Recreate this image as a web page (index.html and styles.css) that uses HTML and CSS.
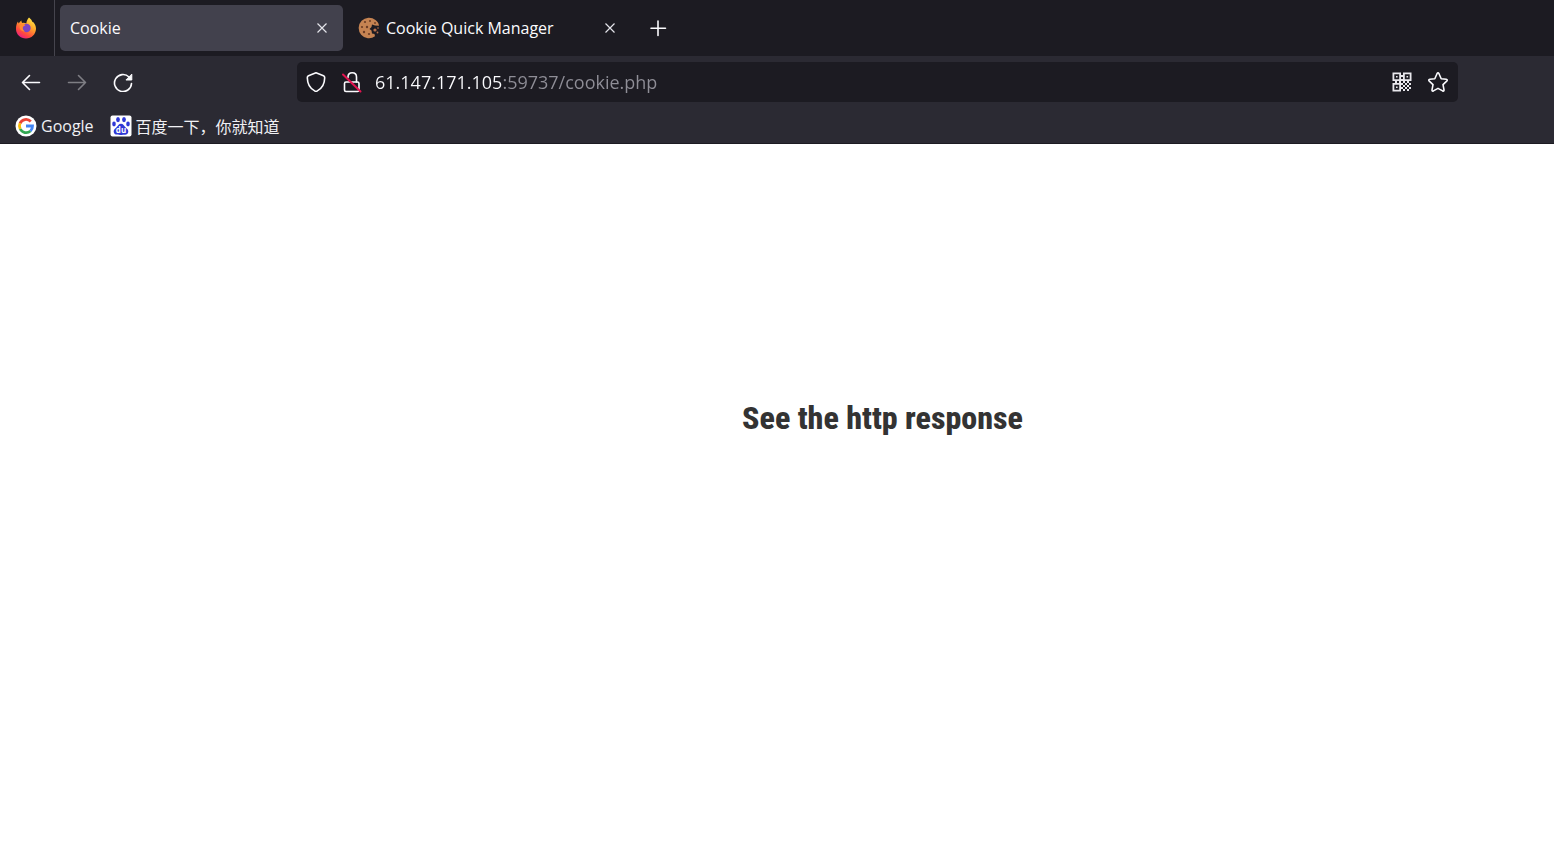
FILE: index.html
```html
<!DOCTYPE html>
<html lang="en">
<head>
<meta charset="utf-8">
<title>Cookie</title>
<link rel="stylesheet" href="styles.css">
</head>
<body>
<header class="browser">
  <div class="tabbar">
    <button class="icon-button view-button" type="button" aria-label="Firefox View">
      <svg class="icon" viewBox="0 0 22 22">
        <defs>
          <linearGradient id="flame" x1="0.85" y1="0" x2="0.25" y2="1">
            <stop offset="0" stop-color="#fff04a"/>
            <stop offset="0.4" stop-color="#ffa52a"/>
            <stop offset="0.75" stop-color="#ff4a3d"/>
            <stop offset="1" stop-color="#e8198b"/>
          </linearGradient>
        </defs>
        <path fill="url(#flame)" d="M14 0.500C16 2 17 3.500 17.500 5c1 .2 1.500.8 1.800 1.500C20.800 8.500 21 10.500 21 12c-.4 5.500-4.500 9.500-10 9.500S1 17.500 1 12c0-3 .5-5.500 2-7.500.2 1 .4 1.500.8 2C4.500 5 5.500 4 6.500 3.500c-.1 1 .2 2 .8 2.500 1.500-.4 3 0 4 .6C11.500 4 12.500 2 14 .5z"/>
        <circle cx="11.500" cy="11" r="4.200" fill="#7b45c4"/>
        <path fill="#ff8a30" d="M5 8c2-1 4-.9 5.500 0-.5 1-2 1.200-2.700 1.800-.3 2 .4 3.700 2.200 4.700-3.500 0-6.500-2.500-5-6.500z"/>
      </svg>
    </button>
    <div class="tab tab-active">
      <span class="tab-title">Cookie</span>
      <button class="tab-close" type="button" aria-label="Close Cookie">
        <svg class="cross" viewBox="0 0 12 12"><path d="M1.500 1.500l9 9M10.500 1.500l-9 9"/></svg>
      </button>
    </div>
    <div class="tab">
      <svg class="icon" viewBox="0 0 22 22">
        <path fill="#c58352" d="M17.500 3A10.300 10.300 0 1 0 17 19.300l-.5-2.300-2.500-.5-.5-3-2-1.500 2-2 .5-2.500 3 1 4 .2c-.2-2.200-1.500-4.400-3.500-5.700z"/>
        <g fill="#6b3d25"><circle cx="7" cy="5" r="1.100"/><circle cx="12" cy="4" r="1"/><circle cx="4" cy="10" r="1.100"/><circle cx="9" cy="10" r="1.200"/><circle cx="6" cy="15" r="1.200"/><circle cx="11" cy="17" r="1.100"/><circle cx="17" cy="6" r="0.900"/></g>
        <g fill="#b9714b"><circle cx="17" cy="13" r="1.600"/><circle cx="20" cy="11" r="0.800"/><circle cx="19.500" cy="15.500" r="0.900"/></g>
      </svg>
      <span class="tab-title">Cookie Quick Manager</span>
      <button class="tab-close" type="button" aria-label="Close Cookie Quick Manager">
        <svg class="cross" viewBox="0 0 12 12"><path d="M1.500 1.500l9 9M10.500 1.500l-9 9"/></svg>
      </button>
    </div>
    <button class="icon-button new-tab" type="button" aria-label="New tab">
      <svg class="line-icon" viewBox="0 0 20 20"><path d="M10 3v14.500M3 10.200h14.500"/></svg>
    </button>
  </div>

  <div class="toolbar">
    <nav class="nav-buttons" aria-label="History">
      <button class="icon-button" type="button" aria-label="Back">
        <svg class="line-icon" viewBox="0 0 20 20"><path d="M18.500 10.500H1.500M8.500 3.500l-7 7 7 7"/></svg>
      </button>
      <button class="icon-button" type="button" aria-label="Forward" disabled>
        <svg class="line-icon" viewBox="0 0 20 20"><path d="M1.500 10.500h17M11.500 3.500l7 7-7 7"/></svg>
      </button>
      <button class="icon-button" type="button" aria-label="Reload">
        <svg class="line-icon" viewBox="0 0 20 20"><path d="M18.500 11.500A8.500 8.500 0 1 1 16 5"/><path class="solid" d="M18.800 2.500v5.500h-5.500z"/></svg>
      </button>
    </nav>
    <div class="urlbar">
      <button class="icon-button url-icon" type="button" aria-label="Tracking protection">
        <svg class="icon outline" viewBox="0 0 22 22"><path d="M11 1.800L18.500 4.800c.9.400 1.200 1 1.200 2-.1 6-3 10.900-7.400 13.100-.9.400-1.700.4-2.600 0C5.300 17.700 2.400 12.800 2.300 6.800c0-1 .3-1.600 1.200-2z"/></svg>
      </button>
      <button class="icon-button url-icon" type="button" aria-label="Connection not secure">
        <svg class="icon outline" viewBox="0 0 22 22"><rect x="3.500" y="11" width="14.500" height="9.500" rx="1.500"/><path d="M7 6.500V6c0-2.600 1.700-4.300 4.200-4.300S15.500 3.400 15.500 6v5"/><path class="slash" d="M2 3.500l17.500 17"/></svg>
      </button>
      <input class="url-input" type="text" aria-label="Address" value="61.147.171.105:59737/cookie.php" spellcheck="false">
      <button class="icon-button url-icon" type="button" aria-label="QR code">
        <svg class="icon" viewBox="0 0 22 22" fill="#e8e7ec">
          <path fill-rule="evenodd" d="M1.500 1.500H10V10H1.500zM3.300 3.300v4.900h4.900V3.300zM12 1.500h8.500V10H12zM13.800 3.300v4.900h4.900V3.300zM1.500 12H10v8.500H1.500zM3.300 13.800v4.900h4.900v-4.900z"/>
          <path d="M5 5h1.600v1.600H5zM15.500 5h1.600v1.600h-1.600zM5 15.500h1.600v1.600H5zM10 4h2v2h-2zM10 8h2v2h-2zM8 10h2v2H8zM12 10h2v2h-2zM16 10h2v2h-2zM10 12h2v2h-2zM14 12h2v2h-2zM18 12h2v2h-2zM12 14h2v2h-2zM16 14h2v2h-2zM10 16h2v2h-2zM14 16h2v2h-2zM18 16h2v2h-2zM12 18h2v2h-2zM16 18h2v2h-2zM4 10h2v2H4z"/>
        </svg>
      </button>
      <button class="icon-button url-icon" type="button" aria-label="Bookmark this page">
        <svg class="icon outline" viewBox="0 0 22 22"><path d="M10 2.700q1-1.600 2 0l2.200 5 5 .6q1.800.4.500 1.800l-3.700 3.500 1 5.200q.2 1.800-1.400 1.100L11 17.400l-4.600 2.500q-1.600.7-1.400-1.100l1-5.200-3.700-3.500Q1 8.700 2.800 8.300l5-.6z"/></svg>
      </button>
    </div>
  </div>

  <nav class="bookmarks" aria-label="Bookmarks">
    <a class="bookmark" href="#google">
      <svg class="icon" viewBox="0 0 22 22">
        <circle cx="11" cy="11" r="10.500" fill="#fff"/>
        <g fill="none" stroke-width="2.800">
          <path stroke="#ea4335" d="M5 8.300A6.600 6.600 0 0 1 15.800 6.500"/>
          <path stroke="#fbbc05" d="M5.200 14A6.600 6.600 0 0 1 5 8.300"/>
          <path stroke="#34a853" d="M15.500 16A6.600 6.600 0 0 1 5.200 14"/>
          <path stroke="#4285f4" d="M11 11h6.500c0 2-.6 3.800-2 5"/>
        </g>
      </svg>
      <span>Google</span>
    </a>
    <a class="bookmark" href="#baidu" lang="zh">
      <svg class="icon" viewBox="0 0 22 22">
        <rect x="0.500" y="0.500" width="21" height="21" rx="2" fill="#fff"/>
        <g fill="#2f38d6">
          <ellipse cx="8" cy="4.600" rx="1.900" ry="2.600"/>
          <ellipse cx="14" cy="4.600" rx="1.900" ry="2.600"/>
          <ellipse cx="4" cy="9" rx="1.800" ry="2.400"/>
          <ellipse cx="18" cy="9" rx="1.800" ry="2.400"/>
          <path d="M11 8.700c2.300 0 3 2.200 4.700 3.700 2 1.700 3 2.800 2.500 4.900-.6 2.700-3.200 2.600-7.200 2.600s-6.600.1-7.200-2.600c-.5-2.100.5-3.200 2.500-4.900 1.700-1.500 2.400-3.700 4.700-3.700z"/>
        </g>
        <text class="paw-text" x="11" y="18" text-anchor="middle">du</text>
      </svg>
      <span>百度一下，你就知道</span>
    </a>
  </nav>
</header>
<main class="page">
  <h1 class="message">See the http response</h1>
</main>
</body>
</html>
```
FILE: styles.css
```css
* {
  box-sizing: border-box;
}

body {
  margin: 0;
  min-height: 100vh;
  display: flex;
  flex-direction: column;
  background: #fff;
  font-family: "Open Sans", "Noto Sans CJK SC", sans-serif;
  font-size: 16px;
  color: #fbfbfe;
}

button {
  padding: 0;
  border: 0;
  background: none;
  color: inherit;
  font: inherit;
}

svg {
  display: block;
  flex: none;
}

.browser {
  background: #2b2a33;
  border-bottom: 1px solid #1c1b22;
}

.tabbar {
  display: flex;
  align-items: center;
  height: 56px;
  background: #1c1b22;
}

.icon-button {
  display: flex;
  align-items: center;
  justify-content: center;
  flex: none;
  width: 46px;
  height: 40px;
}

.icon-button:disabled {
  opacity: 0.4;
}

.view-button {
  width: 55px;
  height: 56px;
  padding-right: 3px;
  border-right: 1px solid #45444d;
}

.new-tab {
  margin-left: 4px;
}

.icon {
  width: 22px;
  height: 22px;
}

.line-icon {
  width: 20px;
  height: 20px;
  fill: none;
  stroke: #fbfbfe;
  stroke-width: 1.6;
  stroke-linecap: round;
  stroke-linejoin: round;
}

.line-icon .solid {
  fill: #fbfbfe;
  stroke-width: 1;
}

.outline {
  fill: none;
  stroke: #fbfbfe;
  stroke-width: 1.6;
  stroke-linecap: round;
  stroke-linejoin: round;
}

.outline .slash {
  stroke: #e3134f;
  stroke-width: 2;
}

.tab {
  display: flex;
  align-items: center;
  gap: 6px;
  width: 283px;
  height: 46px;
  margin-left: 5px;
  padding: 0 10px;
  border-radius: 5px;
}

.tab-active {
  background: #42414d;
}

.tab-title {
  flex: 1;
  white-space: nowrap;
}

.tab-close {
  display: flex;
  align-items: center;
  justify-content: center;
  width: 22px;
  height: 22px;
}

.cross {
  width: 12px;
  height: 12px;
  fill: none;
  stroke: #e4e4ea;
  stroke-width: 1.2;
}

.toolbar {
  display: flex;
  align-items: center;
  gap: 151px;
  height: 52px;
  padding: 0 96px 0 8px;
}

.nav-buttons {
  display: flex;
}

.urlbar {
  display: flex;
  align-items: center;
  flex: 1;
  height: 40px;
  padding: 0 2px 0 1px;
  border-radius: 5px;
  background: #1c1b22;
}

.url-icon {
  width: 36px;
}

.url-input {
  flex: 1;
  min-width: 0;
  padding: 0;
  margin-left: 5px;
  border: 0;
  outline: 0;
  font: inherit;
  font-size: 18px;
  color: transparent;
  background: linear-gradient(90deg, #fbfbfe 128px, #8f8e97 128px);
  -webkit-background-clip: text;
  background-clip: text;
}

.bookmarks {
  display: flex;
  align-items: center;
  gap: 16px;
  height: 35px;
  padding: 0 15px;
}

.bookmark {
  display: flex;
  align-items: center;
  gap: 4px;
  color: #f0f0f4;
  text-decoration: none;
}

.paw-text {
  font-family: "Open Sans", sans-serif;
  font-size: 8px;
  font-weight: 700;
  fill: #fff;
}

.page {
  flex: 1;
  padding: 250px 0 0 211px;
}

.message {
  margin: 0;
  color: #333;
  font-family: "Roboto Condensed", "Liberation Sans Narrow", "DejaVu Sans Condensed", sans-serif;
  font-size: 32px;
  line-height: 48px;
  font-weight: 800;
  text-align: center;
}
```
